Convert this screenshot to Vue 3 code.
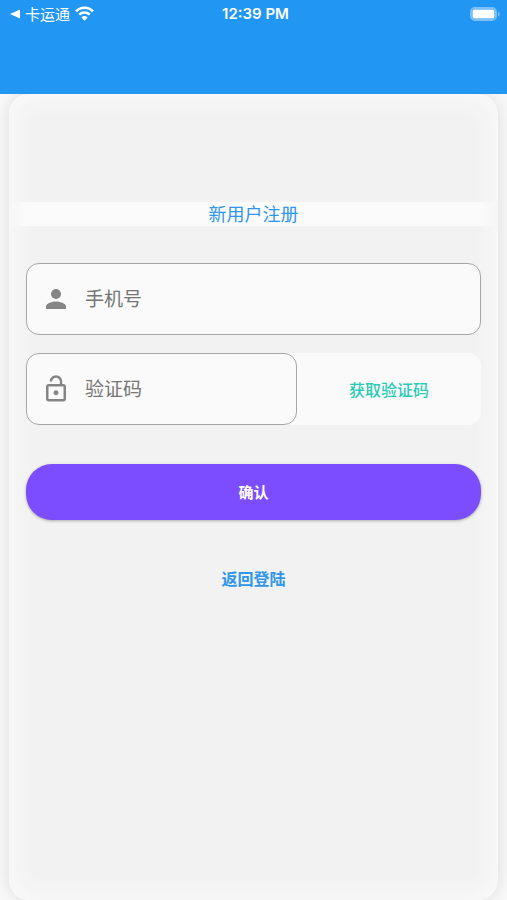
<script setup>
import { ref } from 'vue'

const phone = ref('')
const code = ref('')
</script>

<template>
  <div class="screen">
    <header class="topbar">
      <div class="status">
        <div class="status-left">
          <svg class="back" viewBox="0 0 10 10" aria-hidden="true"><path d="M0 5 10 0.5v9z" /></svg>
          <span class="carrier">卡运通</span>
          <svg class="wifi" viewBox="0 0 18 14" aria-hidden="true">
            <path d="M1 4.900a11.200 11.200 0 0 1 16 0" />
            <path d="M4 8a7.200 7.200 0 0 1 10 0" />
            <path class="dot" d="M9 13.800 6 10.700a4.500 4.500 0 0 1 6 0z" />
          </svg>
        </div>
        <span class="time">12:39 PM</span>
        <svg class="battery" viewBox="0 0 31 14" aria-hidden="true">
          <rect class="shell" x="1" y="1" width="25" height="12" rx="4" />
          <rect class="level" x="2.5" y="2.5" width="22" height="9" rx="2" />
          <path class="tip" d="M28 4.5c2.4 1 2.4 4 0 5z" />
        </svg>
      </div>
    </header>

    <main class="body">
      <form class="card" @submit.prevent>
        <h1 class="title">新用户注册</h1>

        <div class="fields">
          <label class="field">
            <svg class="icon" viewBox="0 0 24 24" aria-hidden="true">
              <circle cx="12" cy="8" r="4" />
              <path d="M12 14c-2.670 0-8 1.340-8 4v2h16v-2c0-2.660-5.330-4-8-4z" />
            </svg>
            <input v-model="phone" type="tel" placeholder="手机号" aria-label="手机号" />
          </label>

          <div class="code-row">
            <label class="field">
              <svg class="icon" viewBox="0 0 24 24" aria-hidden="true">
                <path d="M12 17c1.100 0 2-.900 2-2s-.900-2-2-2-2 .900-2 2 .900 2 2 2zm6-9h-1V6c0-2.760-2.240-5-5-5S7 3.240 7 6h1.900c0-1.710 1.390-3.100 3.100-3.100 1.710 0 3.100 1.390 3.100 3.100v2H6c-1.100 0-2 .900-2 2v10c0 1.100.900 2 2 2h12c1.100 0 2-.900 2-2V10c0-1.100-.900-2-2-2zm0 12H6V10h12v10z" />
              </svg>
              <input v-model="code" type="text" placeholder="验证码" aria-label="验证码" />
            </label>
            <button class="get-code" type="button">获取验证码</button>
          </div>

          <button class="confirm" type="submit">确认</button>
          <a class="login" href="#login">返回登陆</a>
        </div>
      </form>
    </main>
  </div>
</template>

<style>
body {
  background: #fafafa;
}
</style>

<style scoped>
.screen {
  display: flex;
  flex-direction: column;
  min-height: 100vh;
  overflow: hidden;
  box-sizing: border-box;
  background: #fafafa;
  font-family: "Noto Sans", "Noto Sans CJK SC", sans-serif;
}

.topbar {
  height: 94px;
  background: #2196f3;
  color: #fff;
  z-index: 1;
}

.status {
  display: grid;
  grid-template-columns: 1fr auto 1fr;
  align-items: center;
  height: 27px;
  padding: 0 6px 0 10px;
}

.status-left {
  display: flex;
  align-items: center;
  gap: 5px;
}

.back {
  width: 10px;
  height: 10px;
  fill: #fff;
}

.carrier {
  font-family: "Noto Sans CJK SC", sans-serif;
  font-size: 15px;
  line-height: 20px;
}

.wifi {
  width: 19px;
  height: 15px;
  fill: none;
  stroke: #fff;
  stroke-width: 2.4;
}

.wifi .dot {
  fill: #fff;
  stroke: none;
}

.time {
  font-family: Inter, sans-serif;
  font-size: 15px;
  font-weight: 600;
  line-height: 20px;
}

.battery {
  justify-self: end;
  width: 31px;
  height: 14px;
}

.shell {
  fill: none;
  stroke: #7cc0f8;
  stroke-width: 2;
}

.level {
  fill: #fff;
}

.tip {
  fill: #7cc0f8;
}

.body {
  display: flex;
  flex: 1;
  padding: 0 9px;
}

.card {
  display: flex;
  flex: 1;
  flex-direction: column;
  min-width: 0;
  padding: 108px 0 40px;
  border-radius: 20px;
  background: #f2f2f2;
  box-shadow: 0 0 20px rgba(0, 0, 0, 0.13), inset 0 0 28px #fcfcfc;
}

.title {
  margin: 0;
  background: linear-gradient(90deg, transparent, #fbfbfb 16px, #fbfbfb calc(100% - 16px), transparent);
  color: #2f96ea;
  font-size: 18px;
  font-weight: 400;
  line-height: 24px;
  text-align: center;
}

.fields {
  display: flex;
  flex-direction: column;
  padding: 37px 17px 0;
}

.field {
  display: flex;
  align-items: center;
  gap: 14px;
  min-width: 0;
  box-sizing: border-box;
  height: 72px;
  padding: 0 14px;
  border: 1px solid #a6a6a6;
  border-radius: 13px;
  background: #fafafa;
}

.icon {
  flex: none;
  width: 30px;
  height: 30px;
  fill: #858585;
}

input {
  flex: 1;
  min-width: 0;
  padding: 0;
  border: 0;
  outline: 0;
  background: transparent;
  color: #333;
  font: inherit;
  font-size: 19px;
}

input::placeholder {
  color: #757575;
  opacity: 1;
}

.code-row {
  display: grid;
  grid-template-columns: 28fr 19fr;
  margin-top: 18px;
  border-radius: 13px;
  background: #fafafa;
}

button {
  padding: 0;
  border: 0;
  font: inherit;
  cursor: pointer;
}

.get-code {
  background: transparent;
  color: #2bcbb5;
  font-size: 16px;
  font-weight: 500;
}

.confirm {
  height: 56px;
  margin-top: 39px;
  border-radius: 26px;
  background: #7c4dff;
  box-shadow: 0 1px 3px rgba(0, 0, 0, 0.3);
  color: #fff;
  font-size: 15px;
  font-weight: 700;
  line-height: 20px;
}

.login {
  align-self: center;
  margin-top: 47px;
  color: #2f96ea;
  font-size: 16px;
  font-weight: 700;
  line-height: 24px;
  text-decoration: none;
}
</style>
